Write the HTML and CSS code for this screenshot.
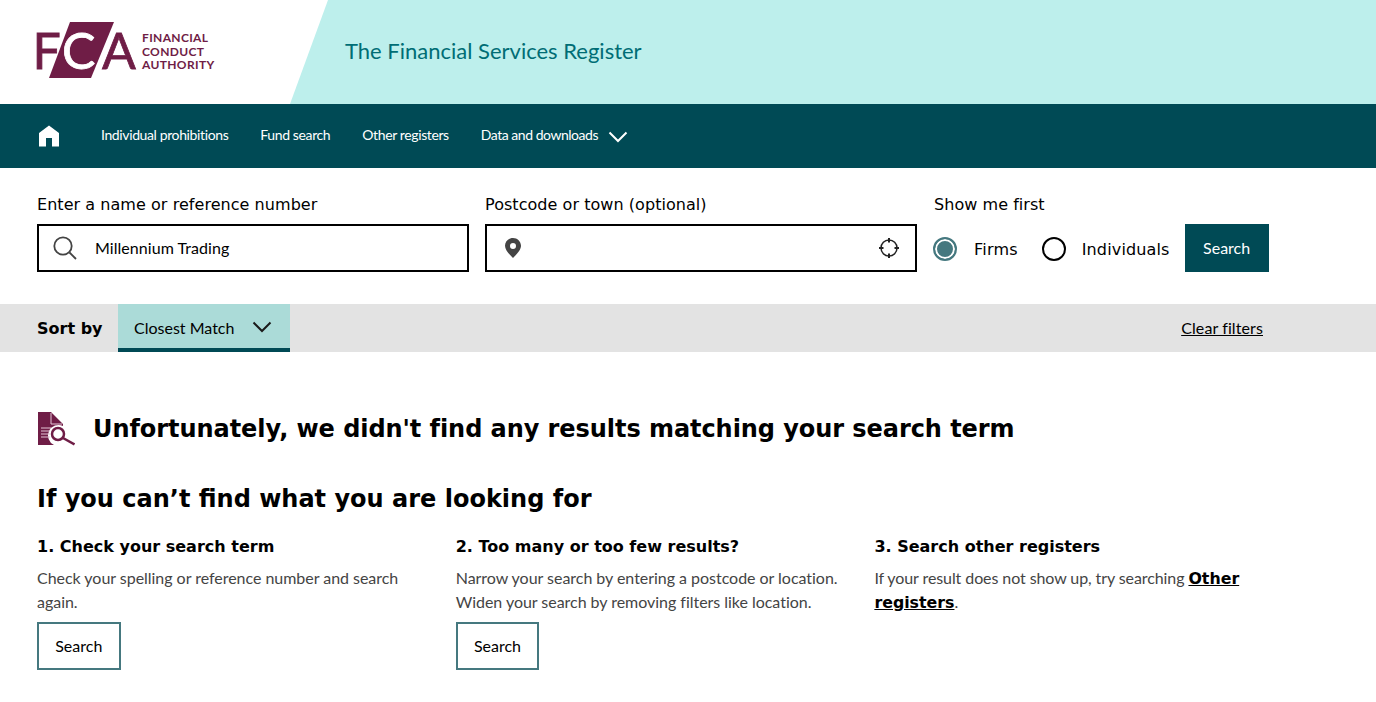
FILE: index.html
```html
<!DOCTYPE html>
<html lang="en">
<head>
    <meta charset="UTF-8">
    <meta name="viewport" content="width=device-width, initial-scale=1.0">
    <title>The Financial Services Register</title>
    <link rel="stylesheet" href="styles.css">
</head>
<body>
    <header class="site-header">
        <div class="logo-panel">
            <svg class="logo-mark" width="104" height="72" viewBox="-4 -8 104 72">
                <text class="logo-letter" x="-4.500" y="47" fill="#6f1d46" stroke="#6f1d46">F</text>
                <polygon points="33,0 77,0 54,56 12,56" fill="#6f1d46"/>
                <text class="logo-letter" x="25" y="47" fill="#ffffff" stroke="#ffffff">C</text>
                <text class="logo-letter" x="65" y="47" fill="#6f1d46" stroke="#6f1d46">A</text>
            </svg>
            <div class="logo-text">FINANCIAL<br>CONDUCT<br>AUTHORITY</div>
        </div>
        <div class="site-title">The Financial Services Register</div>
    </header>

    <nav class="main-nav">
        <a class="nav-home" href="#" aria-label="Home">
            <svg width="22" height="22" viewBox="0 0 22 22"><path d="M11 0.5 L21 8 V21.5 H14 V13 H8 V21.5 H1 V8 Z" fill="#ffffff"/></svg>
        </a>
        <a class="nav-link" href="#">Individual prohibitions</a>
        <a class="nav-link" href="#">Fund search</a>
        <a class="nav-link" href="#">Other registers</a>
        <a class="nav-link nav-drop" href="#">Data and downloads
            <svg width="20" height="12" viewBox="0 0 20 12"><path d="M1.5 1.5 L10 10 L18.5 1.5" fill="none" stroke="#ffffff" stroke-width="2"/></svg>
        </a>
    </nav>

    <form class="search-form">
        <div class="field">
            <label class="field-label">Enter a name or reference number</label>
            <div class="input-box">
                <svg class="input-icon-search" width="24" height="24" viewBox="0 0 24 24"><circle cx="10" cy="10" r="8.7" fill="none" stroke="#444444" stroke-width="1.8"/><path d="M16.5 16.5 L23 23" stroke="#444444" stroke-width="1.8"/></svg>
                <span class="input-value">Millennium Trading</span>
            </div>
        </div>
        <div class="field">
            <label class="field-label">Postcode or town (optional)</label>
            <div class="input-box">
                <svg class="input-icon-pin" width="16" height="20" viewBox="0 0 16 20"><path fill-rule="evenodd" d="M8 0 C3.6 0 0 3.5 0 7.8 C0 12 4.5 16.500 8 20 C11.500 16.500 16 12 16 7.800 C16 3.500 12.400 0 8 0 Z M8 5 A3 3 0 1 1 8 11 A3 3 0 1 1 8 5 Z" fill="#444444"/></svg>
                <svg class="input-icon-locate" width="20" height="20" viewBox="0 0 20 20"><circle cx="10" cy="10" r="8" fill="none" stroke="#222222" stroke-width="1.500"/><path d="M10 0 V4.500 M10 15.500 V20 M0 10 H4.500 M15.500 10 H20" stroke="#222222" stroke-width="2"/></svg>
            </div>
        </div>
        <div class="field field-show">
            <label class="field-label">Show me first</label>
            <div class="show-row">
                <span class="radio radio-on"></span><span class="radio-label radio-label-first">Firms</span>
                <span class="radio"></span><span class="radio-label radio-label-last">Individuals</span>
                <button class="btn-search" type="button">Search</button>
            </div>
        </div>
    </form>

    <div class="sort-bar">
        <span class="sort-label">Sort by</span>
        <div class="sort-select">Closest Match
            <svg width="20" height="12" viewBox="0 0 20 12"><path d="M1.500 1.500 L10 10 L18.500 1.500" fill="none" stroke="#1a1a1a" stroke-width="2"/></svg>
        </div>
        <a class="clear-link" href="#">Clear filters</a>
    </div>

    <main class="results">
        <div class="no-results">
            <svg width="38" height="34" viewBox="0 0 38 34">
                <path d="M1 0 H14 L26 12 V14 A10 10 0 0 0 17 33 H1 Z" fill="#6f1d46"/>
                <path d="M14 1 V12 H25" fill="none" stroke="#e6c6d6" stroke-width="1"/>
                <path d="M4 16 H14 M4 19 H13 M4 22 H13 M4 25 H13" stroke="#e6c6d6" stroke-width="1"/>
                <circle cx="21" cy="22" r="6" fill="#ffffff" stroke="#6f1d46" stroke-width="2.500"/>
                <path d="M26 26 L37.500 32.500" stroke="#6f1d46" stroke-width="2.500"/>
            </svg>
            <h1>Unfortunately, we didn't find any results matching your search term</h1>
        </div>

        <h2>If you can’t find what you are looking for</h2>

        <div class="help-grid">
            <div class="help-col">
                <h3>1. Check your search term</h3>
                <p>Check your spelling or reference number and search again.</p>
                <button class="btn-outline" type="button">Search</button>
            </div>
            <div class="help-col">
                <h3>2. Too many or too few results?</h3>
                <p>Narrow your search by entering a postcode or location. Widen your search by removing filters like location.</p>
                <button class="btn-outline" type="button">Search</button>
            </div>
            <div class="help-col">
                <h3>3. Search other registers</h3>
                <p class="help-tight">If your result does not show up, try searching <a class="strong-link" href="#">Other registers</a>.</p>
            </div>
        </div>
    </main>
</body>
</html>
```

FILE: styles.css
```css
* {
    box-sizing: border-box;
}

body {
    margin: 0;
    font-family: Lato, "Liberation Sans", sans-serif;
    background: #ffffff;
    color: #000000;
    overflow: hidden;
}

.site-header {
    display: flex;
    align-items: center;
    height: 104px;
    background: #bdefec;
}

.logo-panel {
    display: flex;
    align-items: center;
    gap: 5px;
    width: 328px;
    height: 104px;
    padding-left: 33px;
    background: #ffffff;
    clip-path: polygon(0 0, 100% 0, 290px 100%, 0 100%);
}

.logo-mark {
    flex: none;
    margin-top: -4px;
}

.logo-letter {
    font-family: Lato, sans-serif;
    font-size: 50px;
    stroke-width: 0.8px;
}

.logo-text {
    margin-top: -1px;
    font-size: 12px;
    line-height: 13.500px;
    font-weight: bold;
    letter-spacing: 0.350px;
    color: #6f1d46;
}

.site-title {
    margin-left: 17px;
    margin-top: -4px;
    font-size: 22px;
    color: #006d75;
}

.main-nav {
    display: flex;
    align-items: center;
    height: 64px;
    padding-left: 38px;
    background: #004a55;
}

.main-nav a {
    color: #ffffff;
    text-decoration: none;
}

.nav-home {
    display: flex;
    margin-right: 41px;
}

.nav-link {
    margin-right: 32px;
    margin-top: -4px;
    font-size: 14px;
    letter-spacing: -0.380px;
}

.nav-drop {
    display: flex;
    align-items: center;
    gap: 10px;
    letter-spacing: -0.470px;
}

.nav-drop svg {
    margin-top: 5px;
}

.search-form {
    display: flex;
    gap: 16px;
    height: 136px;
    padding: 24px 0 0 37px;
}

.field {
    display: flex;
    flex-direction: column;
}

.field-show {
    margin-left: 1px;
}

.field-label {
    height: 32px;
    font-family: "DejaVu Sans", sans-serif;
    font-size: 16px;
    line-height: 26px;
    letter-spacing: 0.050px;
}

.input-box {
    display: flex;
    align-items: center;
    width: 432px;
    height: 48px;
    border: 2px solid #000000;
    background: #ffffff;
}

.input-icon-search {
    margin-left: 14px;
}

.input-value {
    margin-left: 18px;
    padding-bottom: 2px;
    font-size: 16px;
    letter-spacing: 0.050px;
}

.input-icon-pin {
    margin-left: 18px;
}

.input-icon-locate {
    margin-left: auto;
    margin-right: 16px;
}

.show-row {
    display: flex;
    align-items: center;
    height: 48px;
    margin-left: -1px;
}

.radio {
    width: 24px;
    height: 24px;
    margin-top: 2px;
    border: 2px solid #000000;
    border-radius: 50%;
    background: #ffffff;
}

.radio-on {
    border-color: #45787f;
    background: #45787f;
    box-shadow: inset 0 0 0 2px #ffffff;
}

.radio-label {
    margin: 2px 24px 0 16px;
    font-family: "DejaVu Sans", sans-serif;
    font-size: 16px;
    letter-spacing: 0.200px;
}

.radio-label-first {
    margin-left: 17px;
}

.radio-label-last {
    margin-right: 15px;
    letter-spacing: 0.150px;
}

.btn-search {
    width: 84px;
    height: 48px;
    padding-bottom: 3px;
    border: none;
    background: #004a55;
    color: #ffffff;
    font-family: inherit;
    font-size: 16px;
}

.sort-bar {
    display: flex;
    align-items: center;
    height: 48px;
    padding-left: 37px;
    background: #e3e3e3;
}

.sort-label {
    width: 81px;
    font-family: "DejaVu Sans", sans-serif;
    font-size: 16px;
    font-weight: bold;
}

.sort-select {
    display: flex;
    align-items: center;
    justify-content: space-between;
    width: 172px;
    height: 48px;
    padding: 2px 18px 0 16px;
    border-bottom: 4px solid #004a55;
    background: #abdbd8;
    font-size: 16px;
}

.clear-link {
    margin-left: auto;
    margin-right: 113px;
    margin-top: -2px;
    color: #000000;
    font-size: 16px;
    letter-spacing: 0.100px;
}

.results {
    padding: 59px 0 0 37px;
}

.no-results {
    display: flex;
    align-items: center;
    gap: 18px;
}

h1 {
    margin: 0;
    font-family: "DejaVu Sans", sans-serif;
    font-size: 24px;
    line-height: 36px;
    letter-spacing: -0.060px;
}

h2 {
    margin: 36px 0 0;
    font-family: "DejaVu Sans", sans-serif;
    font-size: 24px;
    line-height: 32px;
}

.help-grid {
    display: grid;
    grid-template-columns: 386.700px 386.700px 386.700px;
    column-gap: 32px;
    margin-top: 20px;
}

h3 {
    margin: 0;
    font-family: "DejaVu Sans", sans-serif;
    font-size: 16px;
    line-height: 24px;
}

.help-col p {
    margin: 7px 0 8px;
    font-size: 16px;
    line-height: 24px;
    letter-spacing: -0.030px;
    color: #444444;
}

.help-col .help-tight {
    letter-spacing: -0.090px;
}

.btn-outline {
    display: block;
    width: 83.600px;
    height: 48px;
    padding-bottom: 3px;
    border: 2px solid #45787f;
    background: #ffffff;
    color: #000000;
    font-family: inherit;
    font-size: 16px;
}

.strong-link {
    font-family: "DejaVu Sans", sans-serif;
    font-size: 15.800px;
    font-weight: bold;
    line-height: 1;
    letter-spacing: 0;
    color: #000000;
}
```
